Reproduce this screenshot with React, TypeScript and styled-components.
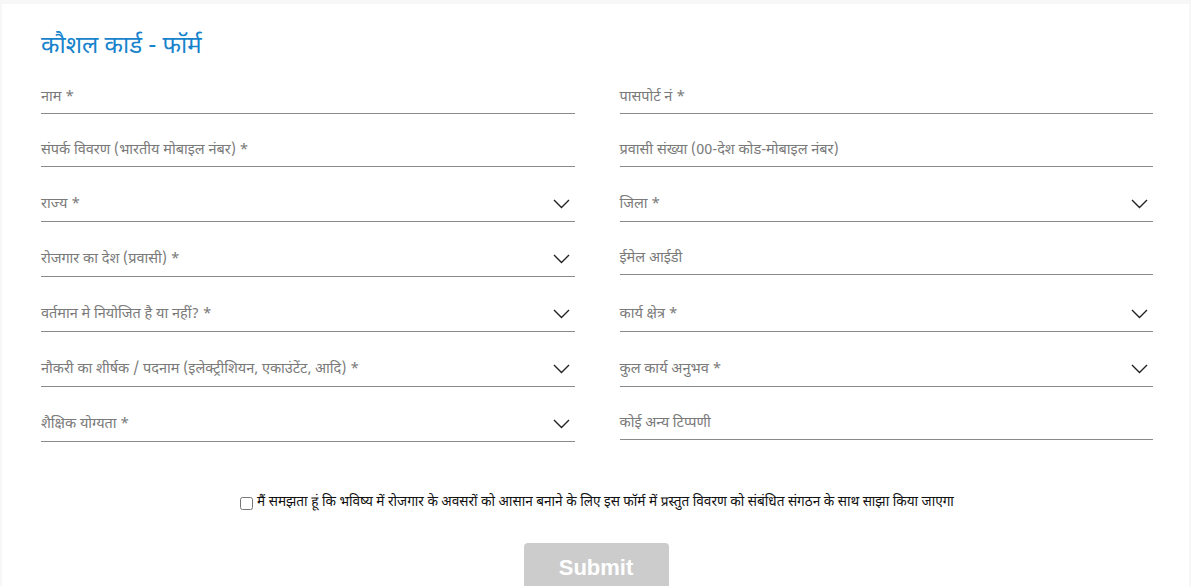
import React from "react";
import styled, { createGlobalStyle } from "styled-components";

const Global = createGlobalStyle`
  html, body { margin: 0; padding: 0; }
  body {
    background: #f7f7f7;
    font-family: "Noto Sans Devanagari", "Lohit Devanagari", "Noto Sans", "Liberation Sans", sans-serif;
  }
`;

const Card = styled.div`
  margin: 4px 2px 0;
  background: #ffffff;
  padding: 28px 36px 0 39px;
  min-height: 600px;
  box-sizing: border-box;
`;

const Title = styled.h2`
  margin: 0;
  font-size: 24px;
  line-height: 30px;
  font-weight: 400;
  color: #1683cc;
`;

const Grid = styled.div`
  margin-top: 14px;
  display: grid;
  grid-template-columns: 1fr 1fr;
  column-gap: 45px;
  row-gap: 15px;
  align-items: start;
`;

const Field = styled.div<{ $select?: boolean }>`
  display: flex;
  align-items: center;
  justify-content: space-between;
  box-sizing: content-box;
  height: ${(p) => (p.$select ? 34 : 32)}px;
  padding-top: 5px;
  padding-right: 5px;
  border-bottom: 1px solid #8a8a8a;
`;

const Label = styled.span`
  font-size: 14.5px;
  color: #7a7a7a;
  white-space: nowrap;
`;

const Chevron = () => (
  <svg width="17" height="10" viewBox="0 0 17 10" fill="none">
    <polyline points="1,1 8.5,8.5 16,1" stroke="#222" strokeWidth="1.4" />
  </svg>
);

const Consent = styled.label`
  margin-top: 51px;
  display: flex;
  justify-content: center;
  align-items: center;
  gap: 4px;
  font-size: 13.6px;
  line-height: 20px;
  color: #111;
`;

const Box = styled.input`
  margin: 0;
  width: 13px;
  height: 13px;
`;

const ButtonRow = styled.div`
  margin-top: 30px;
  display: flex;
  justify-content: center;
  padding-right: 2px;
`;

const Submit = styled.button`
  width: 145px;
  height: 50px;
  border: none;
  border-radius: 4px;
  background: #cccccc;
  color: #ffffff;
  font-family: "Liberation Sans", Arial, sans-serif;
  font-weight: 700;
  font-size: 22px;
`;

type F = { label: string; select?: boolean };

const fields: F[] = [
  { label: "नाम *" },
  { label: "पासपोर्ट नं *" },
  { label: "संपर्क विवरण (भारतीय मोबाइल नंबर) *" },
  { label: "प्रवासी संख्या (00-देश कोड-मोबाइल नंबर)" },
  { label: "राज्य *", select: true },
  { label: "जिला *", select: true },
  { label: "रोजगार का देश (प्रवासी) *", select: true },
  { label: "ईमेल आईडी" },
  { label: "वर्तमान मे नियोजित है या नहीं? *", select: true },
  { label: "कार्य क्षेत्र *", select: true },
  { label: "नौकरी का शीर्षक / पदनाम (इलेक्ट्रीशियन, एकाउंटेंट, आदि) *", select: true },
  { label: "कुल कार्य अनुभव *", select: true },
  { label: "शैक्षिक योग्यता *", select: true },
  { label: "कोई अन्य टिप्पणी" },
];

export default function App() {
  return (
    <>
      <Global />
      <Card>
        <Title>कौशल कार्ड - फॉर्म</Title>
        <Grid>
          {fields.map((f) => (
            <Field key={f.label} $select={f.select}>
              <Label>{f.label}</Label>
              {f.select && <Chevron />}
            </Field>
          ))}
        </Grid>
        <Consent>
          <Box type="checkbox" />
          <span>
            मैं समझता हूं कि भविष्य में रोजगार के अवसरों को आसान बनाने के लिए इस फॉर्म में प्रस्तुत विवरण को संबंधित संगठन के साथ साझा किया जाएगा
          </span>
        </Consent>
        <ButtonRow>
          <Submit>Submit</Submit>
        </ButtonRow>
      </Card>
    </>
  );
}
